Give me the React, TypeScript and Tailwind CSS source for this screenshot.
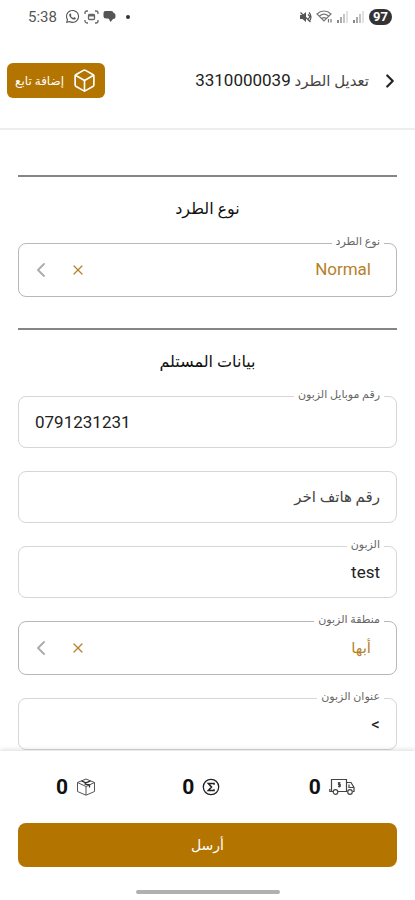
import { useState, type ReactNode } from "react";
import { ChevronLeft, ChevronRight, X, Box } from "lucide-react";
import { FaWhatsapp } from "react-icons/fa";

function Bars() {
  return (
    <svg width="12" height="12" viewBox="0 0 12 12" fill="#c4c4c4" aria-hidden="true">
      <rect x="0" y="9" width="2" height="3" fill="#888" />
      <rect x="3" y="6" width="2" height="6" fill="#aaa" />
      <rect x="6" y="3" width="2" height="9" />
      <rect x="9" y="0" width="2" height="12" fill="#e2e2e2" />
    </svg>
  );
}

function StatusBar() {
  return (
    <div dir="ltr" className="flex h-[33px] items-center justify-between pl-7 pr-[23px] text-[#555]">
      <div className="flex items-center gap-1">
        <span className="mr-1 text-[15px] leading-5">5:38</span>
        <FaWhatsapp size={15} />
        <svg width="15" height="14" viewBox="0 0 15 14" fill="none" stroke="#666" strokeWidth="1.3" aria-hidden="true">
          <path d="M1 4V3a2 2 0 0 1 2-2h1M11 1h1a2 2 0 0 1 2 2v1M14 10v1a2 2 0 0 1-2 2h-1M4 13H3a2 2 0 0 1-2-2v-1" />
          <rect x="4.5" y="4.500" width="6" height="5" rx="1" />
          <path d="M4.500 5.500h6" strokeWidth="2" />
        </svg>
        <svg width="13" height="13" viewBox="0 0 13 13" fill="#555" aria-hidden="true">
          <path d="M2.500 1h6a2.500 2.500 0 0 1 2 1.800A2.500 2.500 0 0 1 12.500 5.500v1A2.500 2.500 0 0 1 10 9L7.500 12 6 9 5 8.500H3A2.500 2.500 0 0 1 .5 6V3a2 2 0 0 1 2-2z" />
        </svg>
        <span className="ml-1.5 size-1 rounded-full bg-[#333]" />
      </div>
      <div className="flex items-center gap-1">
        <svg width="13" height="12" viewBox="0 0 13 12" fill="#555" stroke="#555" aria-hidden="true">
          <path d="M1 4h2.500L7 1v10L3.500 8H1z" stroke="none" />
          <path d="M9 3.500l2 2-2 3M10 1.500c2 2 2.500 5 1 8M1.500 1.500l10 9.500" fill="none" strokeWidth="1.200" />
        </svg>
        <svg width="17" height="13" viewBox="0 0 17 13" fill="none" stroke="#777" strokeWidth="1.200" aria-hidden="true">
          <path d="M1 4c4-4 10-4 14 0L8 11zM3.500 6c3-2.500 6-2.500 9 0M6 8.300c1.300-1 2.700-1 4 0" />
          <path d="M12.500 9v3.500M15 9v3.500" />
        </svg>
        <Bars />
        <Bars />
        <span className="rounded-full bg-[#333] px-1 text-[13px] font-bold leading-4 text-white">97</span>
      </div>
    </div>
  );
}

function Field({ id, label, strong, children }: { id: string; label: string; strong?: boolean; children: ReactNode }) {
  return (
    <div className={`relative flex items-center rounded-lg border ${strong ? "h-[54px] border-[#b8b8b8]" : "h-[52px] border-[#d6d6d6]"}`}>
      <label htmlFor={id} className="absolute -top-2.5 right-3 bg-white px-1 text-[11px] leading-4 text-[#666]">
        {label}
      </label>
      {children}
    </div>
  );
}

function SelectField({ id, label, option }: { id: string; label: string; option: string }) {
  const [value, setValue] = useState(option);
  const latin = /^[A-Za-z]/.test(value);
  return (
    <Field id={id} label={label} strong>
      <select
        id={id}
        value={value}
        onChange={(e) => setValue(e.target.value)}
        className={`h-full min-w-0 flex-1 appearance-none bg-transparent pr-[25px] text-[#b5822a] outline-none ${latin ? "text-[17px]" : "text-[15px]"}`}
      >
        <option value=""></option>
        <option value={option}>{option}</option>
      </select>
      <button type="button" aria-label="مسح" onClick={() => setValue("")} className="flex size-8 items-center justify-center text-[#b5822a]">
        <X size={16} strokeWidth={1.8} />
      </button>
      <ChevronLeft size={24} strokeWidth={1.8} className="ml-2.5 mr-[9px] text-[#aaa]" aria-hidden="true" />
    </Field>
  );
}

function SectionTitle({ children }: { children: ReactNode }) {
  return (
    <>
      <hr className="border-0 border-t-2 border-[#858585]" />
      <h2 className="mb-[22px] mt-5 text-center text-[16px] font-medium leading-6 text-[#111]">{children}</h2>
    </>
  );
}

function TruckIcon() {
  return (
    <svg width="27" height="18" viewBox="0 0 27 18" fill="none" stroke="#444" strokeWidth="1.200" aria-hidden="true">
      <path d="M4 13.500H2.500v-12h15v12H9M17.500 4.500H22l3 5v4h-1M17.500 13.500h1M20 6.500v3h4.500" />
      <path d="M.8 11v2.500h2" />
      <circle cx="6.500" cy="14" r="2.300" />
      <circle cx="21" cy="14" r="2.300" />
      <path d="M11.500 4.800h-2v1.700h1.700v2H9M10.200 4v5.500" />
    </svg>
  );
}

function SigmaIcon() {
  return (
    <svg width="18" height="18" viewBox="0 0 18 18" fill="none" stroke="#222" aria-hidden="true">
      <circle cx="9" cy="9" r="7.700" strokeWidth="1.300" />
      <path d="M12 6.800V5.500H6.400L9.500 9l-3.100 3.500H12v-1.300" strokeWidth="1.600" />
    </svg>
  );
}

function ParcelIcon() {
  return (
    <svg width="20" height="18" viewBox="0 0 20 18" fill="none" stroke="#555" strokeWidth="1" strokeLinejoin="round" aria-hidden="true">
      <path d="M10 1l8.500 3.500v9L10 17.200 1.500 13.500v-9zM1.500 4.500L10 8.500l8.500-4M10 8.500v8.700" />
      <path d="M5.500 2.900l4.500 1.900-1 1.200 4.500 1v2.500M14.500 2.900L10 4.800" strokeWidth="1.300" stroke="#333" />
    </svg>
  );
}

function Stat({ icon, value }: { icon: ReactNode; value: number }) {
  return (
    <div className="flex items-center justify-end gap-2 pl-[38px]">
      {icon}
      <span className="text-[21px] font-bold leading-7 text-[#111]">{value}</span>
    </div>
  );
}

export default function App() {
  return (
    <div dir="rtl" lang="ar" className="flex min-h-screen flex-col bg-white font-['Roboto','DejaVu_Sans',sans-serif]">
      <StatusBar />
      <header className="flex h-[97px] items-center justify-between border-b-2 border-[#eee] pl-[7px] pr-[14px]">
        <div className="flex items-center gap-2.5">
          <button type="button" aria-label="رجوع" className="text-[#222]">
            <ChevronRight size={22} strokeWidth={2.4} />
          </button>
          <h1 className="text-[15px] font-normal leading-6 text-[#444]">
            تعديل الطرد <span className="text-[17px] text-[#222]">3310000039</span>
          </h1>
        </div>
        <button type="button" className="flex h-[35px] items-center gap-2 rounded-md bg-[#b37400] px-2 text-[12px] text-white">
          <Box size={25} strokeWidth={1.6} />
          إضافة تابع
        </button>
      </header>

      <main className="flex-1 px-[18px] pt-[45px]">
        <SectionTitle>نوع الطرد</SectionTitle>
        <SelectField id="parcel-type" label="نوع الطرد" option="Normal" />
        <div className="h-[31px]" />
        <SectionTitle>بيانات المستلم</SectionTitle>
        <div className="flex flex-col gap-[23px]">
          <Field id="mobile" label="رقم موبايل الزبون">
            <input id="mobile" type="tel" dir="ltr" defaultValue="0791231231" className="h-full w-full bg-transparent px-4 text-left text-[17px] text-[#222] outline-none" />
          </Field>
          <div className="flex h-[52px] rounded-lg border border-[#d6d6d6]">
            <input type="tel" dir="rtl" aria-label="رقم هاتف اخر" placeholder="رقم هاتف اخر" className="h-full w-full bg-transparent px-4 text-right text-[15px] text-[#222] outline-none placeholder:text-[#444]" />
          </div>
          <Field id="customer" label="الزبون">
            <input id="customer" type="text" dir="ltr" defaultValue="test" className="h-full w-full bg-transparent px-4 text-right text-[17px] text-[#222] outline-none" />
          </Field>
          <SelectField id="area" label="منطقة الزبون" option="أبها" />
          <Field id="address" label="عنوان الزبون">
            <input id="address" type="text" dir="ltr" defaultValue="<" className="h-full w-full bg-transparent px-4 text-right text-[17px] text-[#222] outline-none" />
          </Field>
        </div>
      </main>

      <footer className="sticky bottom-0 bg-white px-[18px] pb-[6px] pt-[22px] shadow-[0_-1px_5px_rgba(0,0,0,0.15)]">
        <div className="grid grid-cols-3">
          <Stat icon={<TruckIcon />} value={0} />
          <Stat icon={<SigmaIcon />} value={0} />
          <Stat icon={<ParcelIcon />} value={0} />
        </div>
        <button type="button" className="mt-[22px] h-11 w-full rounded-lg bg-[#b37400] text-[14px] text-white">
          أرسل
        </button>
        <div className="mx-auto mt-[23px] h-1 w-36 rounded-full bg-[#b0b0b0]" />
      </footer>
    </div>
  );
}
